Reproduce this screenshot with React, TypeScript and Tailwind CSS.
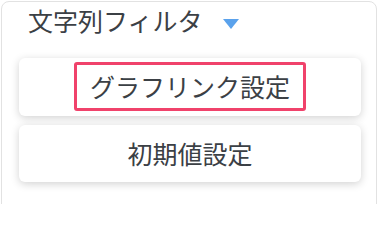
const font = { fontFamily: '"Noto Sans CJK JP", "Noto Sans", sans-serif' };

const App = () => {
  return (
    <div className="w-[378px] h-[204px] bg-white overflow-hidden pt-px pl-px" style={font}>
      <div className="w-[376px] h-[240px] border border-[#e2e2e2] rounded-lg">
        {/* Header */}
        <div className="flex items-center h-[36px] pl-[26px]">
          <span className="text-[25px] leading-[36px] text-[#3b4045]">文字列フィルタ</span>
          <svg className="ml-[20px] mt-[8px]" width="16" height="10" viewBox="0 0 16 10">
            <polygon points="0,0 16,0 8,10" fill="#5aa2ec" />
          </svg>
        </div>

        {/* Buttons */}
        <div className="flex flex-col gap-[9px] ml-[17px] mt-[20px] w-[342px]">
          <div className="h-[58px] bg-white rounded-md shadow-[0_2px_8px_rgba(0,0,0,0.18)] flex items-start justify-center pt-[4px]">
            <div className="h-[49px] px-[13px] border-[3px] border-[#f0426b] rounded-[3px] flex items-center">
              <span className="text-[25px] leading-none text-[#3b4045]">グラフリンク設定</span>
            </div>
          </div>
          <div className="h-[57px] bg-white rounded-md shadow-[0_2px_8px_rgba(0,0,0,0.18)] flex items-center justify-center">
            <span className="text-[25px] leading-none text-[#3b4045]">初期値設定</span>
          </div>
        </div>
      </div>
    </div>
  );
};

export default App;
